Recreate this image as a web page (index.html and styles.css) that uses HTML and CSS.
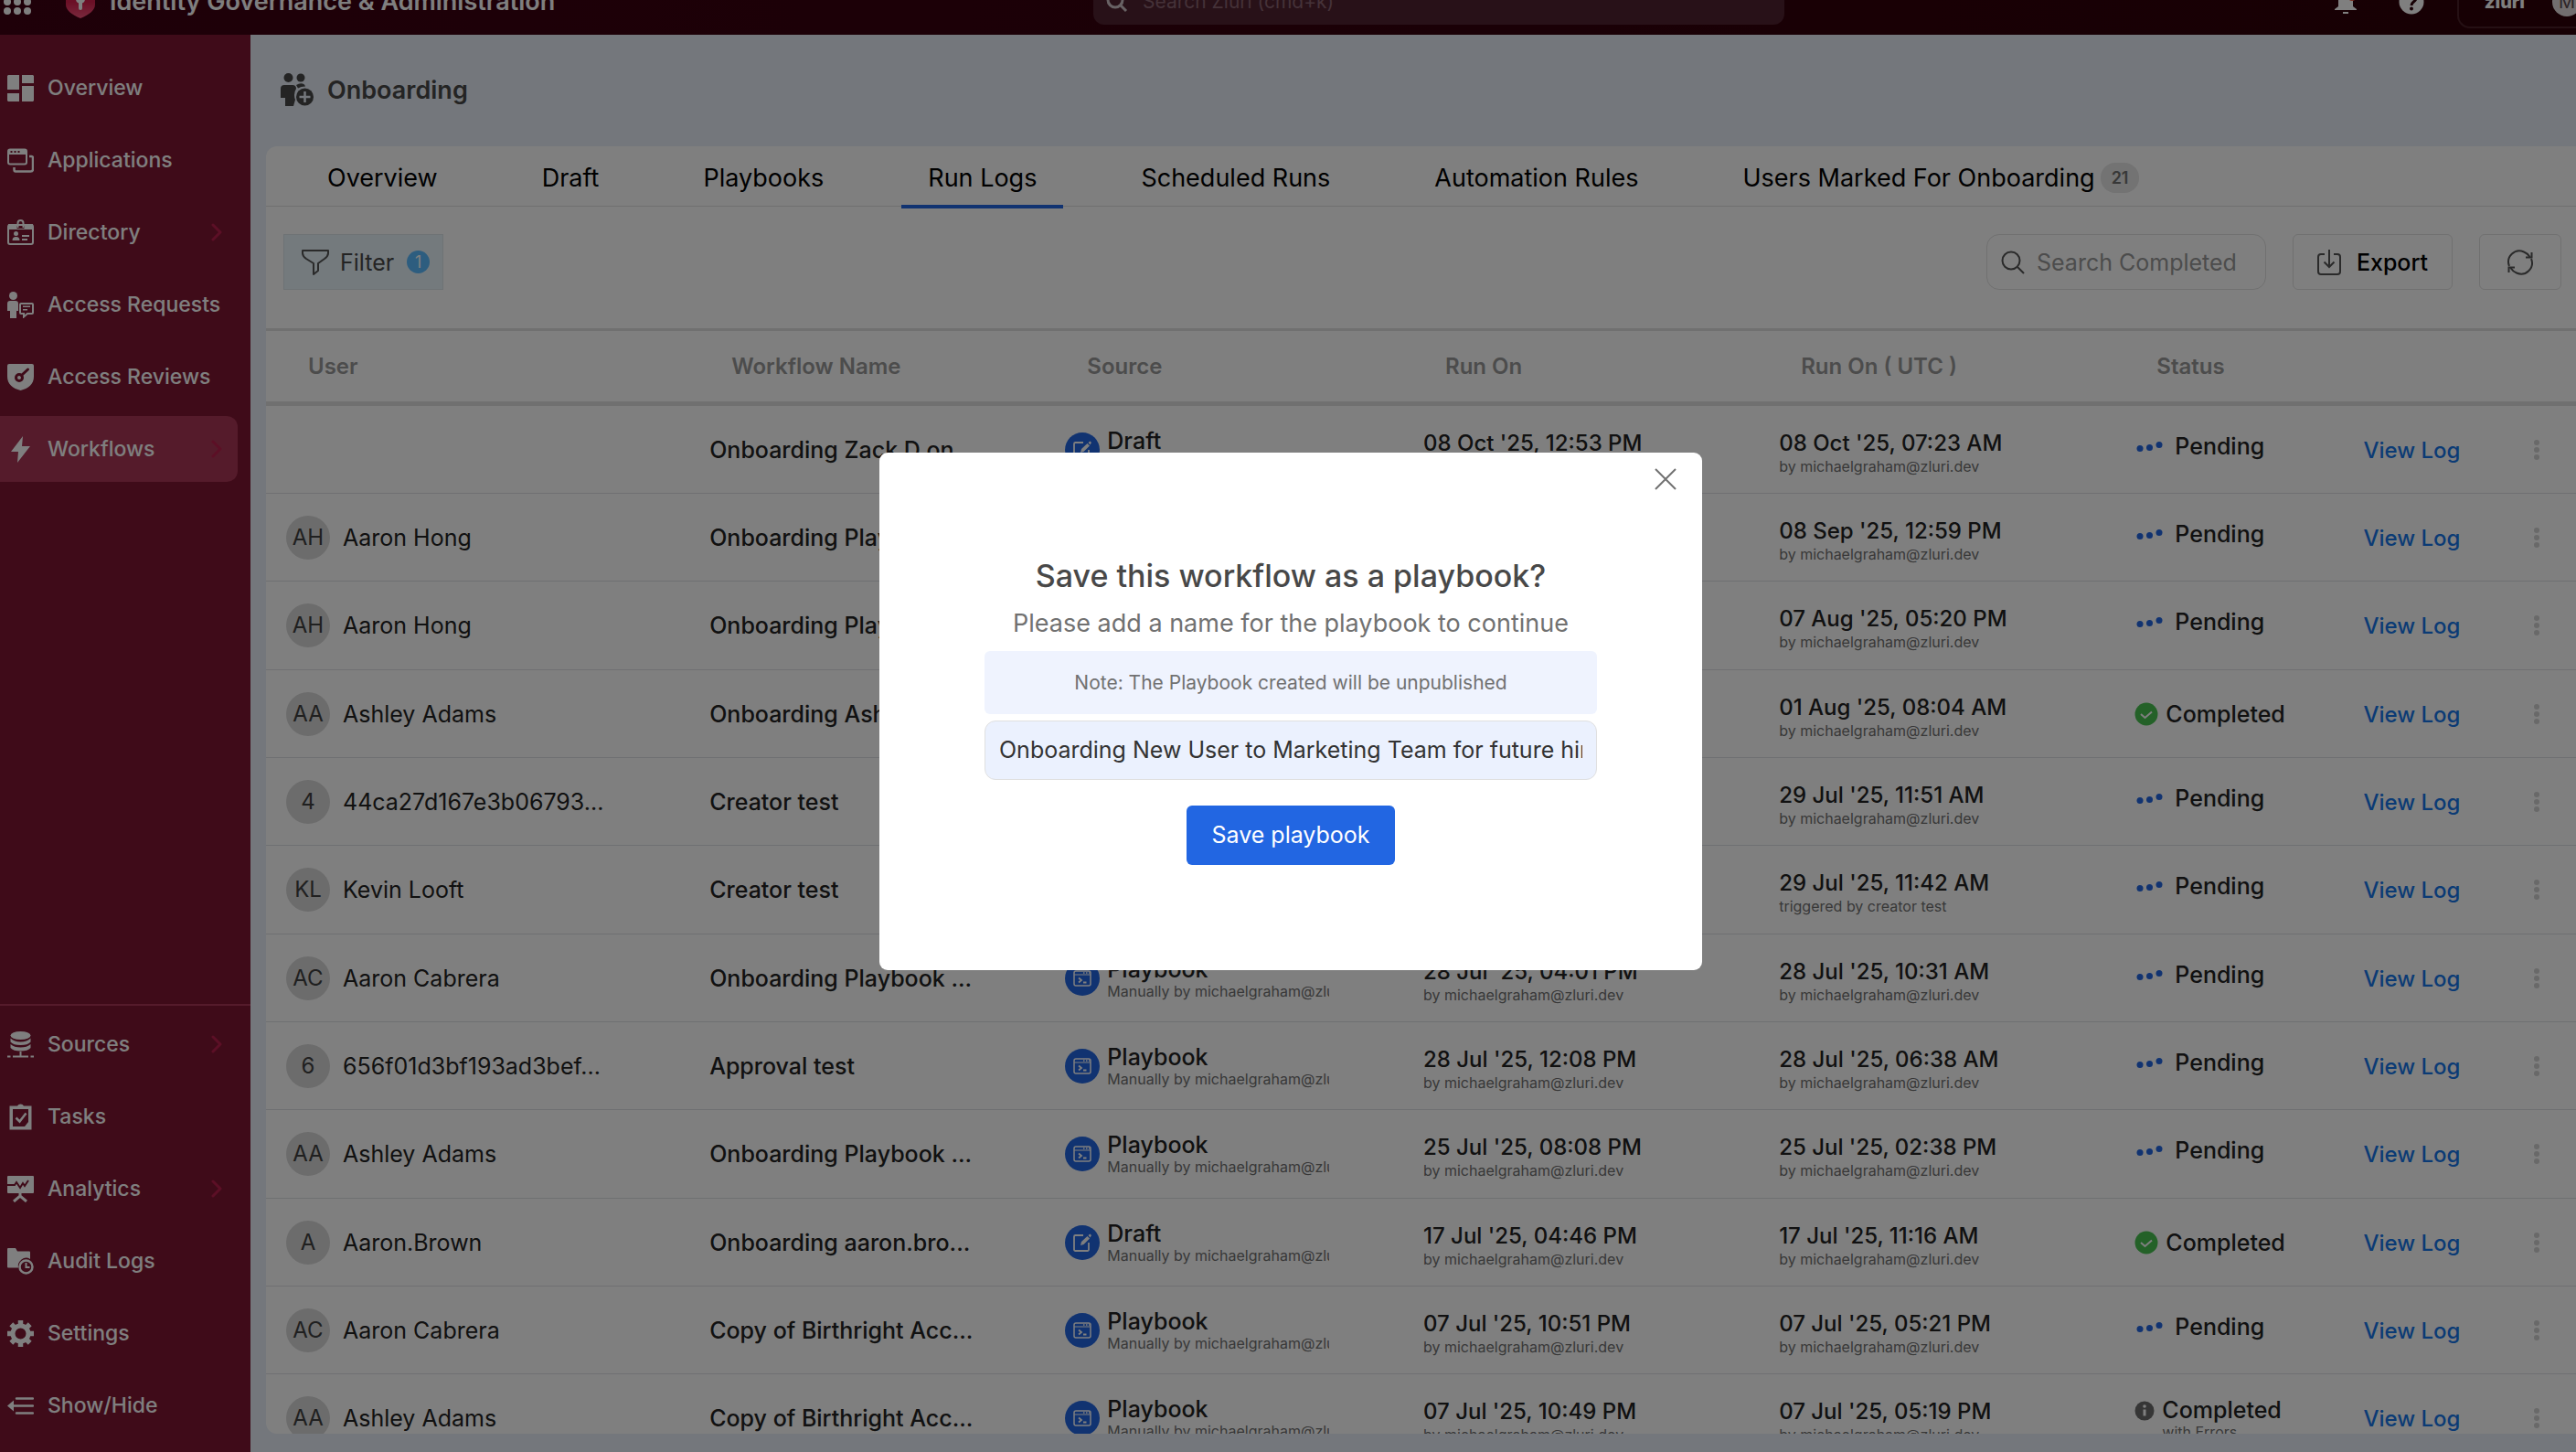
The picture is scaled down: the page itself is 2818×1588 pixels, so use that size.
FILE: index.html
```html
<!DOCTYPE html>
<html lang="en">
<head>
<meta charset="utf-8">
<title>Onboarding - Run Logs</title>
<link rel="stylesheet" href="styles.css">
</head>
<body>
<svg class="sprite" aria-hidden="true">
  <symbol id="i-chevron" viewBox="0 0 12 20"><path d="M2 2l8 8-8 8" fill="none" stroke="currentColor" stroke-width="3" stroke-linecap="round" stroke-linejoin="round"/></symbol>
  <symbol id="i-playbook" viewBox="0 0 38 38"><rect x="10" y="11" width="18" height="16" rx="2" fill="none" stroke="currentColor" stroke-width="1.500"/><path d="M10 15h18" stroke="currentColor" stroke-width="1.200"/><path d="M20 13h1.500M23 13h1.500M26 13h1" stroke="currentColor" stroke-width="1.500"/><path d="M15 18.500l3 2.500-3 2.500M20 23.500h3.500" fill="none" stroke="currentColor" stroke-width="1.800"/></symbol>
  <symbol id="i-draft" viewBox="0 0 38 38"><path d="M20 11h-8.500a1.500 1.500 0 0 0-1.500 1.500v14a1.500 1.500 0 0 0 1.500 1.500h13a1.500 1.500 0 0 0 1.500-1.500V19" fill="none" stroke="currentColor" stroke-width="1.800"/><path d="M17 22l1-4 6.500-6 2.500 2.500-6.500 6.500zM25.500 11l2-1.500 1.500 1.500-1.500 2.500z" fill="currentColor"/></symbol>
  <symbol id="i-pending" viewBox="0 0 30 16"><circle cx="4" cy="10.500" r="3.500" fill="currentColor"/><circle cx="14.500" cy="9.500" r="3.500" fill="currentColor"/><circle cx="25" cy="6.500" r="3.500" fill="currentColor"/></symbol>
  <symbol id="i-done" viewBox="0 0 26 26"><circle cx="13" cy="13" r="12.500" fill="#48c251"/><path d="M7 13l4.500 4 7.500-6.500" fill="none" stroke="#fff" stroke-width="2"/></symbol>
  <symbol id="i-info" viewBox="0 0 22 22"><circle cx="11" cy="11" r="10.500" fill="#6d6d6d"/><path d="M11 9.500v7" stroke="#fff" stroke-width="3"/><circle cx="11" cy="6" r="1.800" fill="#fff"/></symbol>
  <symbol id="i-more" viewBox="0 0 8 24"><circle cx="4" cy="4" r="3" fill="currentColor"/><circle cx="4" cy="12" r="3" fill="currentColor"/><circle cx="4" cy="20" r="3" fill="currentColor"/></symbol>
</svg>

<header class="topbar">
  <button class="icon-btn apps" aria-label="Apps"><svg viewBox="0 0 30 30" width="30" height="30" fill="#fff"><circle cx="4" cy="5" r="4"/><circle cx="15" cy="5" r="4"/><circle cx="26" cy="5" r="4"/><circle cx="4" cy="15" r="4"/><circle cx="15" cy="15" r="4"/><circle cx="26" cy="15" r="4"/><circle cx="4" cy="25" r="4"/><circle cx="15" cy="25" r="4"/><circle cx="26" cy="25" r="4"/></svg></button>
  <svg class="shield" viewBox="0 0 32 36" width="32" height="36"><defs><linearGradient id="shield-fill" x1="0" y1="0" x2="0" y2="1"><stop offset="0.500" stop-color="#d61f4c"/><stop offset="1" stop-color="#f5537c"/></linearGradient></defs><path d="M16 0l16 5v16c0 6-6 11-16 15C6 32 0 27 0 21V5z" fill="url(#shield-fill)"/><circle cx="16" cy="15" r="5" fill="#fff"/><path d="M16 15v10" stroke="#fff" stroke-width="4" stroke-linecap="round"/></svg>
  <span class="product">Identity Governance &amp; Administration</span>
  <label class="global-search"><svg viewBox="0 0 24 24" width="24" height="24" fill="none" stroke="#d0c4c8" stroke-width="3"><circle cx="10" cy="10" r="8"/><path d="M16 16l6 6"/></svg><input type="search" aria-label="Search Zluri" placeholder="Search Zluri (cmd+k)"></label>
  <div class="top-actions">
    <button class="icon-btn" aria-label="Notifications"><svg viewBox="0 0 24 28" width="24" height="28"><path d="M12 0c5 0 8 4 8 9v10l4 3v1H0v-1l4-3V9c0-5 3-9 8-9zM9 25h6v2H9z" fill="#fff"/><circle cx="19" cy="9" r="4" fill="#f0563c"/></svg></button>
    <button class="icon-btn" aria-label="Help"><svg viewBox="0 0 28 28" width="28" height="28"><circle cx="14" cy="14" r="13.500" fill="#fff"/><path d="M10 11c0-6 9-6 9-1 0 4-5 3.500-5 8" fill="none" stroke="#2e0008" stroke-width="3"/><circle cx="14" cy="21.500" r="2" fill="#2e0008"/></svg></button>
    <button class="account"><span class="brand">zluri</span><span class="me">M</span></button>
  </div>
</header>

<div class="shell">
  <nav class="sidebar" aria-label="Main">
    <div class="nav-group">
      <a class="nav-item" href="#"><svg viewBox="0 0 29 29" fill="currentColor"><path d="M1 0h12v16H0V1zM0 20h13v9H1l-1-1zM16 0h12l1 1v8H16zM16 12h13v16l-1 1H16z"/></svg><span>Overview</span></a>
      <a class="nav-item" href="#"><svg viewBox="0 0 29 29"><rect x="1" y="2.500" width="20" height="16" rx="2" fill="none" stroke="currentColor" stroke-width="2"/><path d="M1 3h20v5H1z" fill="currentColor"/><path d="M3.500 5h2M7.500 5h2M11.500 5h2" stroke="#7e1632" stroke-width="2"/><path d="M24 10h2.500q1.500 0 1.500 2v12q0 2.500-2.500 2.500H9q-1.500 0-1.500-2V22" fill="none" stroke="currentColor" stroke-width="2.500"/></svg><span>Applications</span></a>
      <a class="nav-item" href="#"><svg viewBox="0 0 29 29"><rect x="1" y="6" width="27" height="21" rx="2" fill="none" stroke="currentColor" stroke-width="2"/><path d="M1 5h9.500v5H18.500V5H28v6H1z" fill="currentColor"/><path d="M11.500 9V4a3 3 0 0 1 6 0v5" fill="none" stroke="currentColor" stroke-width="2"/><circle cx="9.500" cy="15.500" r="2.500" fill="currentColor"/><path d="M5.500 23q0-4 4-4t4 4zM16 17h8v2h-8zM16 21h6v2h-6z" fill="currentColor"/></svg><span>Directory</span><svg class="chev"><use href="#i-chevron"/></svg></a>
      <a class="nav-item" href="#"><svg viewBox="0 0 29 29" fill="currentColor"><circle cx="6.500" cy="4.500" r="4.500"/><path d="M3 10h6q3 0 3 3v8h-2v8H3v-8H0v-8q0-3 3-3z"/><path d="M15 13h12q1 0 1 1v9q0 1-1 1h-5l-4 3.500V24h-3q-1 0-1-1v-9q0-1 1-1z" fill="none" stroke="currentColor" stroke-width="2"/><path d="M17 15.500h8v1.500h-8zM17 19h5v1.500h-5z"/></svg><span>Access Requests</span></a>
      <a class="nav-item" href="#"><svg viewBox="0 0 29 29"><path d="M2 0h25q2 0 2 2v12c0 8-6 13-14.500 15C6 27 0 22 0 14V2q0-2 2-2z" fill="currentColor"/><circle cx="13" cy="15" r="3.500" fill="none" stroke="#7e1632" stroke-width="3"/><path d="M15.500 12.500L22.500 6" stroke="#7e1632" stroke-width="3" stroke-linecap="round"/></svg><span>Access Reviews</span></a>
      <a class="nav-item active" href="#" aria-current="page"><svg viewBox="0 0 29 29"><path d="M17 0L4 17h8l-1 12 14-18h-9z" fill="currentColor"/></svg><span>Workflows</span><svg class="chev"><use href="#i-chevron"/></svg></a>
    </div>
    <div class="nav-group bottom">
      <a class="nav-item" href="#"><svg viewBox="0 0 29 29"><ellipse cx="14.500" cy="4.500" rx="11" ry="4.500" fill="currentColor"/><path d="M3.500 7.500q4 4 11 4t11-4v4q-3 3.500-11 3.500t-11-3.500zM3.500 14q4 3.500 11 3.500t11-3.500v4q-3 3.500-11 3.500t-11-3.500z" fill="currentColor"/><path d="M14.500 22v5M6 27.500h17M0 27.500h3.500M25.500 27.500H29" stroke="currentColor" stroke-width="2"/></svg><span>Sources</span><svg class="chev"><use href="#i-chevron"/></svg></a>
      <a class="nav-item" href="#"><svg viewBox="0 0 29 29"><path d="M2.500 2.500H11q1-2 3.500-2t3.500 2h8.500v26h-24z" fill="currentColor"/><path d="M6 6h17v14l-4 5H6z" fill="#7e1632"/><path d="M9.500 15.500l4 4 7-9" fill="none" stroke="currentColor" stroke-width="2.500"/></svg><span>Tasks</span></a>
      <a class="nav-item" href="#"><svg viewBox="0 0 29 29"><path d="M1 0h27q1 0 1 1v17q0 1-1 1H1q-1 0-1-1V1q0-1 1-1z" fill="currentColor"/><path d="M0 10h8l2-3 4 6 3-5 2 3 4-6" fill="none" stroke="#7e1632" stroke-width="2"/><path d="M14 19v3M7 28l7-6 7 6" fill="none" stroke="currentColor" stroke-width="3"/></svg><span>Analytics</span><svg class="chev"><use href="#i-chevron"/></svg></a>
      <a class="nav-item" href="#"><svg viewBox="0 0 29 29"><path d="M1 0h8l2 3.500h13q1 0 1 1V12q-5-3-9.500.500T12 21.500H1q-1 0-1-1V1q0-1 1-1z" fill="currentColor"/><circle cx="20.500" cy="20.500" r="7" fill="none" stroke="currentColor" stroke-width="2.500"/><path d="M20.500 16v5h4" fill="none" stroke="currentColor" stroke-width="2"/></svg><span>Audit Logs</span></a>
      <a class="nav-item" href="#"><svg viewBox="0 0 29 29" fill="none" stroke="currentColor"><circle cx="14.500" cy="14.500" r="8.500" stroke-width="5"/><path d="M14.500 0v5M14.500 24v5M0 14.500h5M24 14.500h5M4.300 4.300l3.500 3.500M21.200 21.200l3.500 3.500M4.300 24.700l3.500-3.500M21.200 7.800l3.500-3.500" stroke-width="5.500"/></svg><span>Settings</span></a>
      <a class="nav-item" href="#"><svg viewBox="0 0 29 29" fill="none" stroke="currentColor" stroke-width="2.500"><path d="M10 6.500h18M6 14.500h22M10 22.500h18" stroke-linecap="round"/><path d="M0 14.500l7-6v12z" fill="currentColor" stroke="none"/></svg><span>Show/Hide</span></a>
    </div>
  </nav>

  <main class="main">
    <h1 class="page-title"><svg viewBox="0 0 36 36" width="36" height="36"><g fill="#484848"><circle cx="8.500" cy="5" r="5"/><circle cx="22" cy="5" r="4.500"/><path d="M4 13h9q4 0 4 4-2 3-2 7 0 3 1 5l-2 7H5v-9H0V17q0-4 4-4zM17 13q5-3 9-.500l1 2q-5 0-8 2z"/><circle cx="26.500" cy="26" r="9.500"/></g><path d="M26.500 20v12M20.500 26h12" stroke="#e8eff9" stroke-width="2.500"/></svg>Onboarding</h1>

    <section class="card">
      <div class="tabs" role="tablist">
        <button role="tab" class="tab">Overview</button>
        <button role="tab" class="tab">Draft</button>
        <button role="tab" class="tab">Playbooks</button>
        <button role="tab" class="tab selected" aria-selected="true">Run Logs</button>
        <button role="tab" class="tab">Scheduled Runs</button>
        <button role="tab" class="tab">Automation Rules</button>
        <button role="tab" class="tab">Users Marked For Onboarding<span class="count">21</span></button>
      </div>

      <div class="toolbar">
        <button class="filter"><svg viewBox="0 0 30 28" width="30" height="28" fill="none" stroke="#555" stroke-width="2" stroke-linejoin="round"><path d="M1 1h28v3q0 3-4 6l-7 5v8l-5 4V15L5 10Q1 7 1 4z"/></svg>Filter<span class="badge">1</span></button>
        <label class="search"><svg viewBox="0 0 26 26" width="26" height="26" fill="none" stroke="#555" stroke-width="2"><circle cx="11" cy="11" r="9.500"/><path d="M18 18l7 7"/></svg><input type="search" aria-label="Search Completed" placeholder="Search Completed"></label>
        <button class="tool export"><svg viewBox="0 0 26 28" width="26" height="28" fill="none" stroke="#555" stroke-width="2"><path d="M8 5H4Q1 5 1 8v16q0 3 3 3h18q3 0 3-3V8q0-3-3-3h-4M13 0v19M7.500 13.500L13 19l5.500-5.500"/></svg>Export</button>
        <button class="tool refresh" aria-label="Refresh"><svg viewBox="0 0 30 28" width="30" height="28" fill="none" stroke="#555" stroke-width="2"><path d="M3 18A12 12 0 0 1 19 2.500Q23 4 25.500 8M27 10a12 12 0 0 1-16 15.500Q7 24 4.500 20"/><path d="M21 8.500h6.500V3M9 19.500H2.500V25"/></svg></button>
      </div>

      <table class="logs">
        <colgroup><col class="c-user"><col class="c-name"><col class="c-source"><col class="c-run"><col class="c-run"><col class="c-status"><col class="c-view"><col></colgroup>
        <thead><tr><th class="first">User</th><th>Workflow Name</th><th>Source</th><th>Run On</th><th>Run On ( UTC )</th><th>Status</th><th></th><th></th></tr></thead>
        <tbody>
          <tr><td></td><td class="wf">Onboarding Zack D on</td><td><div class="source"><svg><use href="#i-draft"/></svg><p>Draft<small>Manually by michaelgraham@zluri.dev</small></p></div></td><td><p class="date">08 Oct '25, 12:53 PM<small>by michaelgraham@zluri.dev</small></p></td><td><p class="date">08 Oct '25, 07:23 AM<small>by michaelgraham@zluri.dev</small></p></td><td><div class="status pending"><svg><use href="#i-pending"/></svg>Pending</div></td><td><a class="view" href="#">View Log</a></td><td><button class="more" aria-label="More"><svg><use href="#i-more"/></svg></button></td></tr>
          <tr><td><div class="user"><span class="avatar">AH</span>Aaron Hong</div></td><td class="wf">Onboarding Playbook ...</td><td><div class="source"><svg><use href="#i-playbook"/></svg><p>Playbook<small>Manually by michaelgraham@zluri.dev</small></p></div></td><td><p class="date">08 Sep '25, 06:29 PM<small>by michaelgraham@zluri.dev</small></p></td><td><p class="date">08 Sep '25, 12:59 PM<small>by michaelgraham@zluri.dev</small></p></td><td><div class="status pending"><svg><use href="#i-pending"/></svg>Pending</div></td><td><a class="view" href="#">View Log</a></td><td><button class="more" aria-label="More"><svg><use href="#i-more"/></svg></button></td></tr>
          <tr><td><div class="user"><span class="avatar">AH</span>Aaron Hong</div></td><td class="wf">Onboarding Playbook ...</td><td><div class="source"><svg><use href="#i-playbook"/></svg><p>Playbook<small>Manually by michaelgraham@zluri.dev</small></p></div></td><td><p class="date">07 Aug '25, 10:50 PM<small>by michaelgraham@zluri.dev</small></p></td><td><p class="date">07 Aug '25, 05:20 PM<small>by michaelgraham@zluri.dev</small></p></td><td><div class="status pending"><svg><use href="#i-pending"/></svg>Pending</div></td><td><a class="view" href="#">View Log</a></td><td><button class="more" aria-label="More"><svg><use href="#i-more"/></svg></button></td></tr>
          <tr><td><div class="user"><span class="avatar">AA</span>Ashley Adams</div></td><td class="wf">Onboarding Ashley ...</td><td><div class="source"><svg><use href="#i-draft"/></svg><p>Draft<small>Manually by michaelgraham@zluri.dev</small></p></div></td><td><p class="date">01 Aug '25, 01:34 PM<small>by michaelgraham@zluri.dev</small></p></td><td><p class="date">01 Aug '25, 08:04 AM<small>by michaelgraham@zluri.dev</small></p></td><td><div class="status"><svg><use href="#i-done"/></svg>Completed</div></td><td><a class="view" href="#">View Log</a></td><td><button class="more" aria-label="More"><svg><use href="#i-more"/></svg></button></td></tr>
          <tr><td><div class="user"><span class="avatar">4</span>44ca27d167e3b06793...</div></td><td class="wf">Creator test</td><td><div class="source"><svg><use href="#i-playbook"/></svg><p>Playbook<small>Manually by michaelgraham@zluri.dev</small></p></div></td><td><p class="date">29 Jul '25, 05:21 PM<small>by michaelgraham@zluri.dev</small></p></td><td><p class="date">29 Jul '25, 11:51 AM<small>by michaelgraham@zluri.dev</small></p></td><td><div class="status pending"><svg><use href="#i-pending"/></svg>Pending</div></td><td><a class="view" href="#">View Log</a></td><td><button class="more" aria-label="More"><svg><use href="#i-more"/></svg></button></td></tr>
          <tr><td><div class="user"><span class="avatar">KL</span>Kevin Looft</div></td><td class="wf">Creator test</td><td><div class="source"><svg><use href="#i-playbook"/></svg><p>Playbook<small>triggered by creator test</small></p></div></td><td><p class="date">29 Jul '25, 05:12 PM<small>triggered by creator test</small></p></td><td><p class="date">29 Jul '25, 11:42 AM<small>triggered by creator test</small></p></td><td><div class="status pending"><svg><use href="#i-pending"/></svg>Pending</div></td><td><a class="view" href="#">View Log</a></td><td><button class="more" aria-label="More"><svg><use href="#i-more"/></svg></button></td></tr>
          <tr><td><div class="user"><span class="avatar">AC</span>Aaron Cabrera</div></td><td class="wf">Onboarding Playbook ...</td><td><div class="source"><svg><use href="#i-playbook"/></svg><p>Playbook<small>Manually by michaelgraham@zluri.dev</small></p></div></td><td><p class="date">28 Jul '25, 04:01 PM<small>by michaelgraham@zluri.dev</small></p></td><td><p class="date">28 Jul '25, 10:31 AM<small>by michaelgraham@zluri.dev</small></p></td><td><div class="status pending"><svg><use href="#i-pending"/></svg>Pending</div></td><td><a class="view" href="#">View Log</a></td><td><button class="more" aria-label="More"><svg><use href="#i-more"/></svg></button></td></tr>
          <tr><td><div class="user"><span class="avatar">6</span>656f01d3bf193ad3bef...</div></td><td class="wf">Approval test</td><td><div class="source"><svg><use href="#i-playbook"/></svg><p>Playbook<small>Manually by michaelgraham@zluri.dev</small></p></div></td><td><p class="date">28 Jul '25, 12:08 PM<small>by michaelgraham@zluri.dev</small></p></td><td><p class="date">28 Jul '25, 06:38 AM<small>by michaelgraham@zluri.dev</small></p></td><td><div class="status pending"><svg><use href="#i-pending"/></svg>Pending</div></td><td><a class="view" href="#">View Log</a></td><td><button class="more" aria-label="More"><svg><use href="#i-more"/></svg></button></td></tr>
          <tr><td><div class="user"><span class="avatar">AA</span>Ashley Adams</div></td><td class="wf">Onboarding Playbook ...</td><td><div class="source"><svg><use href="#i-playbook"/></svg><p>Playbook<small>Manually by michaelgraham@zluri.dev</small></p></div></td><td><p class="date">25 Jul '25, 08:08 PM<small>by michaelgraham@zluri.dev</small></p></td><td><p class="date">25 Jul '25, 02:38 PM<small>by michaelgraham@zluri.dev</small></p></td><td><div class="status pending"><svg><use href="#i-pending"/></svg>Pending</div></td><td><a class="view" href="#">View Log</a></td><td><button class="more" aria-label="More"><svg><use href="#i-more"/></svg></button></td></tr>
          <tr><td><div class="user"><span class="avatar">A</span>Aaron.Brown</div></td><td class="wf">Onboarding aaron.bro...</td><td><div class="source"><svg><use href="#i-draft"/></svg><p>Draft<small>Manually by michaelgraham@zluri.dev</small></p></div></td><td><p class="date">17 Jul '25, 04:46 PM<small>by michaelgraham@zluri.dev</small></p></td><td><p class="date">17 Jul '25, 11:16 AM<small>by michaelgraham@zluri.dev</small></p></td><td><div class="status"><svg><use href="#i-done"/></svg>Completed</div></td><td><a class="view" href="#">View Log</a></td><td><button class="more" aria-label="More"><svg><use href="#i-more"/></svg></button></td></tr>
          <tr><td><div class="user"><span class="avatar">AC</span>Aaron Cabrera</div></td><td class="wf">Copy of Birthright Acc...</td><td><div class="source"><svg><use href="#i-playbook"/></svg><p>Playbook<small>Manually by michaelgraham@zluri.dev</small></p></div></td><td><p class="date">07 Jul '25, 10:51 PM<small>by michaelgraham@zluri.dev</small></p></td><td><p class="date">07 Jul '25, 05:21 PM<small>by michaelgraham@zluri.dev</small></p></td><td><div class="status pending"><svg><use href="#i-pending"/></svg>Pending</div></td><td><a class="view" href="#">View Log</a></td><td><button class="more" aria-label="More"><svg><use href="#i-more"/></svg></button></td></tr>
          <tr><td><div class="user"><span class="avatar">AA</span>Ashley Adams</div></td><td class="wf">Copy of Birthright Acc...</td><td><div class="source"><svg><use href="#i-playbook"/></svg><p>Playbook<small>Manually by michaelgraham@zluri.dev</small></p></div></td><td><p class="date">07 Jul '25, 10:49 PM<small>by michaelgraham@zluri.dev</small></p></td><td><p class="date">07 Jul '25, 05:19 PM<small>by michaelgraham@zluri.dev</small></p></td><td><div class="status errors"><svg><use href="#i-info"/></svg><p>Completed<small>with Errors</small></p></div></td><td><a class="view" href="#">View Log</a></td><td><button class="more" aria-label="More"><svg><use href="#i-more"/></svg></button></td></tr>
        </tbody>
      </table>
    </section>
  </main>
</div>

<div class="overlay">
  <form class="modal" role="dialog" aria-modal="true" aria-labelledby="modal-title">
    <button type="button" class="close" aria-label="Close"><svg viewBox="0 0 24 24" width="24" height="24" fill="none" stroke="#717171" stroke-width="2"><path d="M1 1l22 22M23 1L1 23"/></svg></button>
    <h2 id="modal-title">Save this workflow as a playbook?</h2>
    <p class="lead">Please add a name for the playbook to continue</p>
    <p class="note">Note: The Playbook created will be unpublished</p>
    <input class="name" type="text" aria-label="Playbook name" value="Onboarding New User to Marketing Team for future hires">
    <button type="button" class="save">Save playbook</button>
  </form>
</div>
</body>
</html>
```
FILE: styles.css
```css
* { box-sizing: border-box; }
body {
  margin: 0;
  height: 100vh;
  display: flex;
  flex-direction: column;
  overflow: hidden;
  font-family: Inter, "Liberation Sans", sans-serif;
  font-size: 25px;
  color: #222;
  background: #e8eff9;
}
button, input { font: inherit; color: inherit; }
button { border: 0; background: none; padding: 0; }
input { min-width: 0; border: 0; outline: 0; background: none; padding: 0; }
a { text-decoration: none; color: inherit; }
p, h1, h2 { margin: 0; }
svg { flex: none; display: block; }
small { display: block; }
.sprite { display: none; }

/* Top bar, scrolled partly out of view */
.topbar {
  flex: none;
  display: flex;
  align-items: center;
  height: 72px;
  margin-top: -34px;
  padding-left: 4px;
  color: #fff;
  background: linear-gradient(90deg, #3e0012, #2e0008);
}
.shield { margin: 0 16px 0 38px; }
.product { flex: 1; padding-bottom: 2px; font-weight: 600; font-size: 27px; }
.global-search {
  display: flex;
  align-items: center;
  gap: 16px;
  width: 756px;
  height: 50px;
  padding: 0 14px;
  border-radius: 12px;
  background: #502230;
}
.global-search input { flex: 1; padding-bottom: 2px; font-size: 21px; }
.global-search input::placeholder { color: #8a6470; opacity: 1; }
.top-actions {
  flex: 0 0 866px;
  display: flex;
  justify-content: flex-end;
  align-items: center;
  gap: 46px;
}
.account {
  display: flex;
  align-items: center;
  gap: 30px;
  height: 58px;
  margin-left: -10px;
  padding-left: 28px;
  border: 2px solid #4a2028;
  border-right: 0;
  border-radius: 14px 0 0 14px;
}
.brand { font-weight: 800; font-size: 20px; }
.me {
  width: 32px;
  height: 32px;
  margin-right: -6px;
  border-radius: 50%;
  background: #e4dcde;
  color: #5a4a50;
  font-size: 20px;
  line-height: 32px;
}

.shell { flex: 1; min-height: 0; display: flex; }

.sidebar {
  flex: none;
  width: 274px;
  display: flex;
  flex-direction: column;
  justify-content: space-between;
  padding: 22px 0 15px;
  background: #7e1632;
  color: #fff;
}
.nav-group { display: flex; flex-direction: column; gap: 7px; }
.nav-group.bottom { padding-top: 6px; border-top: 2px solid #aa3656; }
.nav-item {
  display: flex;
  align-items: center;
  gap: 15px;
  height: 72px;
  margin-right: 14px;
  padding: 0 17px 0 8px;
  border-radius: 0 12px 12px 0;
  font-size: 23px;
  font-weight: 500;
}
.nav-item svg { width: 29px; height: 29px; }
.nav-item span { flex: 1; padding-bottom: 1px; white-space: nowrap; }
.nav-item svg.chev { width: 12px; height: 20px; color: #b81f4c; }
.nav-item.active { background: #aa3656; }

.main { flex: 1; min-width: 0; display: flex; flex-direction: column; padding: 0 0 20px 17px; }
.page-title {
  display: flex;
  align-items: center;
  gap: 15px;
  height: 122px;
  padding: 0 0 2px 16px;
  font-size: 27px;
  font-weight: 600;
  color: #484848;
}
.card {
  flex: 1;
  min-height: 0;
  overflow: hidden;
  border-radius: 12px 0 0 12px;
  background: #fff;
}

.tabs {
  display: flex;
  gap: 56px;
  height: 66px;
  padding-left: 38px;
  border-bottom: 1px solid #e0e0e0;
}
.tab {
  display: flex;
  align-items: center;
  gap: 6px;
  height: 68px;
  padding: 0 29px;
  border: solid transparent;
  border-width: 4px 0;
  font-size: 27px;
  color: #000;
  white-space: nowrap;
}
.tab.selected { border-bottom-color: #2266e2; }
.count {
  padding: 0 12px;
  border-radius: 16px;
  background: #e6e6e6;
  color: #717171;
  font-size: 18px;
  font-weight: 600;
  line-height: 33px;
}

.toolbar { display: flex; align-items: center; gap: 29px; padding: 30px 16px 42px 19px; }
.filter {
  display: flex;
  align-items: center;
  gap: 12px;
  height: 61px;
  margin-right: auto;
  padding: 0 14px 0 19px;
  border: 1px solid #dde6ea;
  background: #e8f4fb;
  color: #484848;
  font-size: 25px;
}
.badge {
  width: 25px;
  height: 25px;
  margin-left: 2px;
  border-radius: 50%;
  background: #5abaff;
  color: #fff;
  font-size: 18px;
  line-height: 25px;
}
.search, .tool {
  display: flex;
  align-items: center;
  height: 61px;
  border: 1px solid #e0e0e0;
  border-radius: 6px;
}
.search { width: 306px; gap: 13px; padding: 0 4px 0 15px; border-radius: 14px; }
.search input { flex: 1; font-size: 25px; }
.search input::placeholder { color: #999; opacity: 1; }
.tool { justify-content: center; gap: 17px; color: #000; font-size: 25px; font-weight: 500; }
.export { width: 175px; }
.refresh { width: 90px; }

.logs { width: 100%; table-layout: fixed; border-collapse: separate; border-spacing: 0; }
.c-user { width: 19.2%; }
.c-name { width: 15.4%; }
.c-source { width: 15.5%; }
.c-run { width: 15.4%; }
.c-status { width: 9.9%; }
.c-view { width: 7.1%; }
.logs th {
  height: 85px;
  padding: 0 0 0 24px;
  border-top: 3px solid #e0e0e0;
  border-bottom: 5px solid #e0e0e0;
  text-align: left;
  font-size: 24px;
  font-weight: 600;
  color: #999;
  white-space: nowrap;
}
.logs th.first { padding-left: 46px; }
.logs td { height: 96px; padding: 0; border-bottom: 1px solid #dfe1e4; white-space: nowrap; }
.logs tr:nth-child(3n) td { height: 97px; }
.user { display: flex; align-items: center; gap: 14px; padding-left: 22px; }
.avatar {
  width: 48px;
  height: 48px;
  border-radius: 50%;
  background: #d8d8d8;
  color: #404040;
  font-size: 24px;
  line-height: 48px;
  text-align: center;
}
.logs .wf { font-size: 25px; font-weight: 500; }
.source { display: flex; align-items: center; gap: 8px; font-size: 25px; font-weight: 500; }
.source svg { width: 38px; height: 38px; border-radius: 50%; background: #2266e2; color: #fff; }
.source p { width: 243px; overflow: hidden; padding-bottom: 2px; line-height: 30px; }
.logs small { font-size: 16px; font-weight: 400; line-height: 18px; color: #717171; }
.date { padding-top: 4px; font-size: 24px; font-weight: 500; line-height: 32px; }
.status { display: flex; align-items: center; gap: 8px; font-size: 25px; font-weight: 500; line-height: 30px; }
.status svg { width: 26px; height: 26px; }
.status.pending { gap: 12px; padding: 0 0 8px 2px; }
.status.pending svg { width: 30px; height: 16px; color: #2266e2; }
.status.errors svg { width: 22px; height: 22px; margin-bottom: 16px; }
.view { color: #1677ea; font-size: 24px; font-weight: 500; }
.more { display: block; padding: 6px; color: #d2d2d2; }
.more svg { width: 8px; height: 24px; }

.overlay {
  position: fixed;
  inset: 0;
  display: flex;
  align-items: center;
  justify-content: center;
  padding: 0 0 32px 6px;
  background: rgba(0, 0, 0, 0.5);
}
.modal {
  position: relative;
  display: flex;
  flex-direction: column;
  align-items: center;
  width: 900px;
  padding: 112px 115px 115px;
  border-radius: 9px;
  background: #fff;
  text-align: center;
}
.close { position: absolute; top: 17px; right: 28px; }
.modal h2 { font-size: 34px; line-height: 46px; font-weight: 500; color: #484848; }
.lead { padding: 10px 0 11px; font-size: 27px; line-height: 38px; color: #717171; }
.note {
  width: 100%;
  margin-bottom: 7px;
  border-radius: 6px;
  background: #eff3fe;
  color: #717171;
  font-size: 21px;
  line-height: 69px;
}
.name {
  width: 100%;
  height: 65px;
  margin-bottom: 28px;
  padding: 0 15px 2px;
  border: 1px solid #e0e0e0;
  border-radius: 12px;
  background: #ebf1fe;
  color: #333;
  font-size: 25px;
}
.save {
  height: 65px;
  padding: 0 27px 2px;
  border-radius: 6px;
  background: #2266e2;
  color: #fff;
  font-size: 25px;
}
```
